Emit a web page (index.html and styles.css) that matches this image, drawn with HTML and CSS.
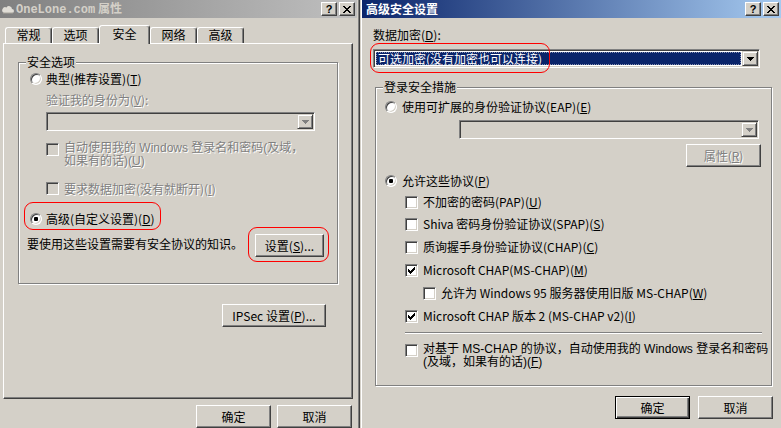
FILE: index.html
```html
<!DOCTYPE html>
<html lang="zh-CN">
<head>
<meta charset="utf-8">
<title>OneLone.com 属性</title>
<link rel="stylesheet" href="styles.css">
</head>
<body>
<div class="screen">
  <div class="win win-left">
    <div class="titlebar inactive">
      <svg class="ticon" width="12" height="10" viewBox="0 0 12 10"><path d="M2 9h8a2 2 0 0 0 0-4 3 3 0 0 0-5.5-1.5A2.5 2.5 0 0 0 2 9z" fill="#e0ddd6"/><path d="M1 9h10" stroke="#a8a49c" stroke-width="1"/></svg>
      <span class="ttext"><span class="mono">OneLone.com</span> 属性</span>
      <div class="tbtns">
        <span class="cbtn">?</span>
        <span class="cbtn"><svg width="8" height="7" viewBox="0 0 8 7"><path d="M0 0h2v1H0zM6 0h2v1H6zM1 1h2v1H1zM5 1h2v1H5zM2 2h4v1H2zM3 3h2v1H3zM2 4h4v1H2zM1 5h2v1H1zM5 5h2v1H5zM0 6h2v1H0zM6 6h2v1H6z"/></svg></span>
      </div>
    </div>
    <div class="tabs">
      <div class="tab">常规</div>
      <div class="tab">选项</div>
      <div class="tab sel">安全</div>
      <div class="tab">网络</div>
      <div class="tab">高级</div>
    </div>
    <div class="panel">
      <div class="group g1">
        <div class="legend">安全选项</div>
        <div class="row r-typ"><span class="radio"></span><span>典型(推荐设置)(<u>T</u>)</span></div>
        <div class="dis lbl-v">验证我的身份为(<u>V</u>):</div>
        <div class="combo off c-v"><span class="dd"><svg width="7" height="4" viewBox="0 0 7 4"><path class="tri-dis" d="M0 0h7v1H0zM1 1h5v1H1zM2 2h3v1H2zM3 3h1v1H3z"/></svg></span></div>
        <div class="cbr ml r-auto"><span class="check off"></span><span class="dis lines"><span class="ln">自动使用我的 Windows 登录名和密码(及域，</span><span class="ln">如果有的话)(<u>U</u>)</span></span></div>
        <div class="cbr r-enc"><span class="check off"></span><span class="dis">要求数据加密(没有就断开)(<u>I</u>)</span></div>
        <div class="row r-adv"><span class="radio on"></span><span>高级(自定义设置)(<u>D</u>)</span></div>
        <div class="r-know"><span class="know">要使用这些设置需要有安全协议的知识。</span><button class="btn b-set">设置(<u>S</u>)...</button></div>
      </div>
      <button class="btn b-ipsec">IPSec 设置(<u>P</u>)...</button>
    </div>
    <div class="btnrow l-btns"><button class="btn">确定</button><button class="btn">取消</button></div>
  </div>

  <div class="win win-right">
    <div class="titlebar active">
      <span class="ttext">高级安全设置</span>
      <div class="tbtns">
        <span class="cbtn">?</span>
        <span class="cbtn"><svg width="8" height="7" viewBox="0 0 8 7"><path d="M0 0h2v1H0zM6 0h2v1H6zM1 1h2v1H1zM5 1h2v1H5zM2 2h4v1H2zM3 3h2v1H3zM2 4h4v1H2zM1 5h2v1H1zM5 5h2v1H5zM0 6h2v1H0zM6 6h2v1H6z"/></svg></span>
      </div>
    </div>
    <div class="lbl-d">数据加密(<u>D</u>):</div>
    <div class="combo c-d"><span class="selitem">可选加密(没有加密也可以连接)</span><span class="dd"><svg width="7" height="4" viewBox="0 0 7 4"><path d="M0 0h7v1H0zM1 1h5v1H1zM2 2h3v1H2zM3 3h1v1H3z"/></svg></span></div>
    <div class="group g2">
      <div class="legend">登录安全措施</div>
      <div class="row r-eap"><span class="radio"></span><span>使用可扩展的身份验证协议(EAP)(<u>E</u>)</span></div>
      <div class="combo off c-eap"><span class="dd"><svg width="7" height="4" viewBox="0 0 7 4"><path class="tri-dis" d="M0 0h7v1H0zM1 1h5v1H1zM2 2h3v1H2zM3 3h1v1H3z"/></svg></span></div>
      <button class="btn b-prop"><span class="dis">属性(<u>R</u>)</span></button>
      <div class="row r-allow"><span class="radio on"></span><span>允许这些协议(<u>P</u>)</span></div>
      <div class="cbr cb cb1"><span class="check"></span><span>不加密的密码(PAP)(<u>U</u>)</span></div>
      <div class="cbr cb cb2"><span class="check"></span><span>Shiva 密码身份验证协议(SPAP)(<u>S</u>)</span></div>
      <div class="cbr cb cb3"><span class="check"></span><span>质询握手身份验证协议(CHAP)(<u>C</u>)</span></div>
      <div class="cbr cb cb4"><span class="check"><svg width="7" height="7" viewBox="0 0 7 7"><path d="M0 2h1v3H0zM1 3h1v3H1zM2 4h1v3H2zM3 3h1v3H3zM4 2h1v3H4zM5 1h1v3H5zM6 0h1v3H6z"/></svg></span><span>Microsoft CHAP(MS-CHAP)(<u>M</u>)</span></div>
      <div class="cbr cb cb5"><span class="check"></span><span>允许为 Windows 95 服务器使用旧版 MS-CHAP(<u>W</u>)</span></div>
      <div class="cbr cb cb6"><span class="check"><svg width="7" height="7" viewBox="0 0 7 7"><path d="M0 2h1v3H0zM1 3h1v3H1zM2 4h1v3H2zM3 3h1v3H3zM4 2h1v3H4zM5 1h1v3H5zM6 0h1v3H6z"/></svg></span><span>Microsoft CHAP 版本 2 (MS-CHAP v2)(<u>I</u>)</span></div>
      <div class="sep"></div>
      <div class="cbr ml cb cb7"><span class="check"></span><span class="lines"><span class="ln">对基于 MS-CHAP 的协议，自动使用我的 Windows 登录名和密码</span><span class="ln">(及域，如果有的话)(<u>F</u>)</span></span></div>
    </div>
    <div class="btnrow r-btns"><button class="btn def">确定</button><button class="btn">取消</button></div>
  </div>

  <span class="mark m1"></span>
  <span class="mark m2"></span>
  <span class="mark m3"></span>
</div>
</body>
</html>
```

FILE: styles.css
```css
* { box-sizing: border-box; margin: 0; padding: 0; }
html, body { width: 781px; height: 428px; overflow: hidden; }
body {
  background: #d4d0c8;
  font-family: "Noto Sans CJK SC", "Liberation Sans", sans-serif;
  font-size: 12px;
  line-height: 14px;
  color: #000;
}
u { text-decoration: underline; text-underline-offset: 1px; }
.mono { font-family: "Liberation Mono", monospace; font-size: 12px; }

.screen { position: relative; display: flex; width: 781px; height: 428px; overflow: hidden; }

.win { display: flex; flex-direction: column; align-items: flex-start; height: 428px; background: #d4d0c8; }
.win-left { width: 360px; flex: none; border-right: 1px solid #404040; box-shadow: inset -1px 0 0 #808080; padding-right: 2px; }
.win-right { flex: 1; border-left: 1px solid #d4d0c8; box-shadow: inset 1px 0 0 #fff; padding-left: 1px; }

/* title bars */
.titlebar { align-self: stretch; flex: none; height: 18px; display: flex; align-items: center; padding-right: 2px; }
.inactive { background: linear-gradient(90deg, #808080, #c0c0c0); color: #d4d0c8; }
.active { background: linear-gradient(90deg, #0a246a, #a6caf0); color: #fff; padding-left: 4px; }
.ticon { flex: none; margin: 0 2px 0 2px; }
.ttext { flex: 1; font-weight: bold; white-space: nowrap; line-height: 18px; }
.tbtns { display: flex; gap: 2px; }
.cbtn {
  width: 16px; height: 14px;
  display: flex; align-items: center; justify-content: center;
  background: #d4d0c8; color: #000;
  border: 1px solid; border-color: #fff #404040 #404040 #fff;
  box-shadow: inset -1px -1px 0 #808080;
  font: bold 11px/12px "Liberation Sans", sans-serif;
}

/* tabs */
.tabs { display: flex; align-items: flex-start; height: 19px; margin-top: 7px; padding-left: 5px; }
.tab {
  width: 47px; height: 16px; margin-top: 2px;
  display: flex; align-items: center; justify-content: center;
  border: 1px solid; border-bottom: none;
  border-color: #fff #404040 transparent #fff;
  box-shadow: inset -1px 0 0 #808080;
  border-radius: 3px 3px 0 0;
  padding-bottom: 1px;
}
.tab.sel { width: 51px; height: 19px; margin-top: 0; position: relative; z-index: 2; background: #d4d0c8; padding-bottom: 3px; }

.panel {
  margin: -1px 0 0 3px;
  width: 350px; height: 357px;
  border: 1px solid; border-color: #fff #404040 #404040 #fff;
  box-shadow: inset -1px -1px 0 #808080;
  display: flex; flex-direction: column; align-items: flex-start;
}

/* group boxes */
.group {
  border: 1px solid #808080;
  box-shadow: inset 1px 1px 0 #fff, 1px 1px 0 #fff;
  display: flex; flex-direction: column; align-items: flex-start;
}
.legend { margin: -8px 0 0 7px; padding: 0 1px; background: #d4d0c8; line-height: 14px; white-space: nowrap; }

.row { display: flex; align-items: center; height: 16px; white-space: nowrap; gap: 4px; }
.cbr { display: flex; align-items: center; height: 14px; white-space: nowrap; gap: 5px; }
.cbr.ml { align-items: flex-start; height: auto; }
.lines { display: flex; flex-direction: column; }
.ln {
  display: block; height: 13px; line-height: 13px;
  font-family: "Liberation Sans", "Noto Sans CJK SC", sans-serif;
}

.dis { color: #808080; text-shadow: 1px 1px 0 #fff; }

/* controls */
.radio {
  width: 12px; height: 12px; flex: none; border-radius: 50%;
  background: #fff;
  border: 1px solid; border-color: #808080 #fff #fff #808080;
  box-shadow: inset 1px 1px 0 #404040, inset -1px -1px 0 #d4d0c8;
  display: flex; align-items: center; justify-content: center;
}
.radio.on::after { content: ""; width: 4px; height: 4px; border-radius: 1px; background: #000; }

.check {
  width: 13px; height: 13px; flex: none;
  background: #fff;
  border: 1px solid; border-color: #808080 #fff #fff #808080;
  box-shadow: inset 1px 1px 0 #404040, inset -1px -1px 0 #d4d0c8;
  display: flex; align-items: center; justify-content: center;
}
.check.off { background: #d4d0c8; }
.cbr.ml .check { margin-top: 1px; }

.combo {
  height: 19px; flex: none;
  display: flex; padding: 1px;
  background: #fff;
  border: 1px solid; border-color: #808080 #fff #fff #808080;
  box-shadow: inset 1px 1px 0 #404040, inset -1px -1px 0 #d4d0c8;
}
.combo.off { background: #d4d0c8; }
.dd {
  width: 16px; height: 15px; margin-left: auto; flex: none;
  display: flex; align-items: center; justify-content: center;
  background: #d4d0c8;
  border: 1px solid; border-color: #d4d0c8 #404040 #404040 #d4d0c8;
  box-shadow: inset 1px 1px 0 #fff, inset -1px -1px 0 #808080;
  padding-top: 1px;
}
.tri-dis { fill: #808080; }
.selitem {
  flex: 1; margin: 1px;
  background: #0a246a; color: #fff;
  padding-left: 2px; line-height: 13px; white-space: nowrap;
  outline: 1px dotted #8890b0; outline-offset: -1px;
}

.btn {
  width: 75px; height: 23px; flex: none;
  display: flex; align-items: center; justify-content: center;
  background: #d4d0c8; color: #000;
  border: 1px solid; border-color: #fff #404040 #404040 #fff;
  box-shadow: inset -1px -1px 0 #808080;
  font: inherit; white-space: nowrap;
}
.btn.def { border-color: #000; box-shadow: inset 1px 1px 0 #fff, inset -1px -1px 0 #404040, inset -2px -2px 0 #808080; }
.btnrow { display: flex; }

/* left window placement */
.g1 { margin: 18px 0 0 14px; width: 320px; padding-bottom: 26px; }
.r-typ { margin: 2px 0 0 11px; }
.lbl-v { margin: 6px 0 0 27px; white-space: nowrap; }
.c-v { margin: 5px 0 0 27px; width: 269px; }
.r-auto { margin: 11px 0 0 27px; }
.r-enc { margin: 14px 0 0 27px; height: 13px; }
.r-adv { margin: 16px 0 0 11px; }
.r-know { display: flex; align-items: flex-start; width: 297px; margin: 7px 0 0 8px; }
.know { margin-top: 3px; line-height: 13px; white-space: nowrap; }
.b-set { width: 69px; margin-left: auto; }
.b-ipsec { width: 104px; margin: 20px 0 0 218px; }
.l-btns { margin: 6px 0 0 196px; gap: 6px; }

/* right window placement */
.lbl-d { margin: 10px 0 0 11px; white-space: nowrap; }
.c-d { margin: 7px 0 0 11px; width: 387px; }
.g2 { margin: 19px 0 0 13px; width: 397px; padding-bottom: 16px; }
.r-eap { margin: 5px 0 0 9px; gap: 5px; }
.c-eap { margin: 5px 0 0 83px; width: 300px; }
.b-prop { margin: 5px 0 0 310px; }
.r-allow { margin: 6px 0 0 9px; gap: 5px; }
.cb { margin-left: 29px; }
.cb1 { margin-top: 6px; }
.cb2 { margin-top: 8px; }
.cb3, .cb4, .cb6 { margin-top: 9px; }
.cb5 { margin-top: 9px; margin-left: 47px; }
.sep { margin: 9px 0 0 29px; width: 357px; height: 2px; border-top: 1px solid #808080; border-bottom: 1px solid #fff; }
.cb7 { margin-top: 9px; }
.r-btns { margin: 10px 0 0 253px; gap: 8px; }

/* red annotation marks */
.mark { position: absolute; border: 1px solid #f00; border-radius: 9px; pointer-events: none; }
.m1 { left: 24px; top: 202px; width: 137px; height: 28px; }
.m2 { left: 248px; top: 227px; width: 81px; height: 35px; }
.m3 { left: 370px; top: 43px; width: 180px; height: 30px; }
```
